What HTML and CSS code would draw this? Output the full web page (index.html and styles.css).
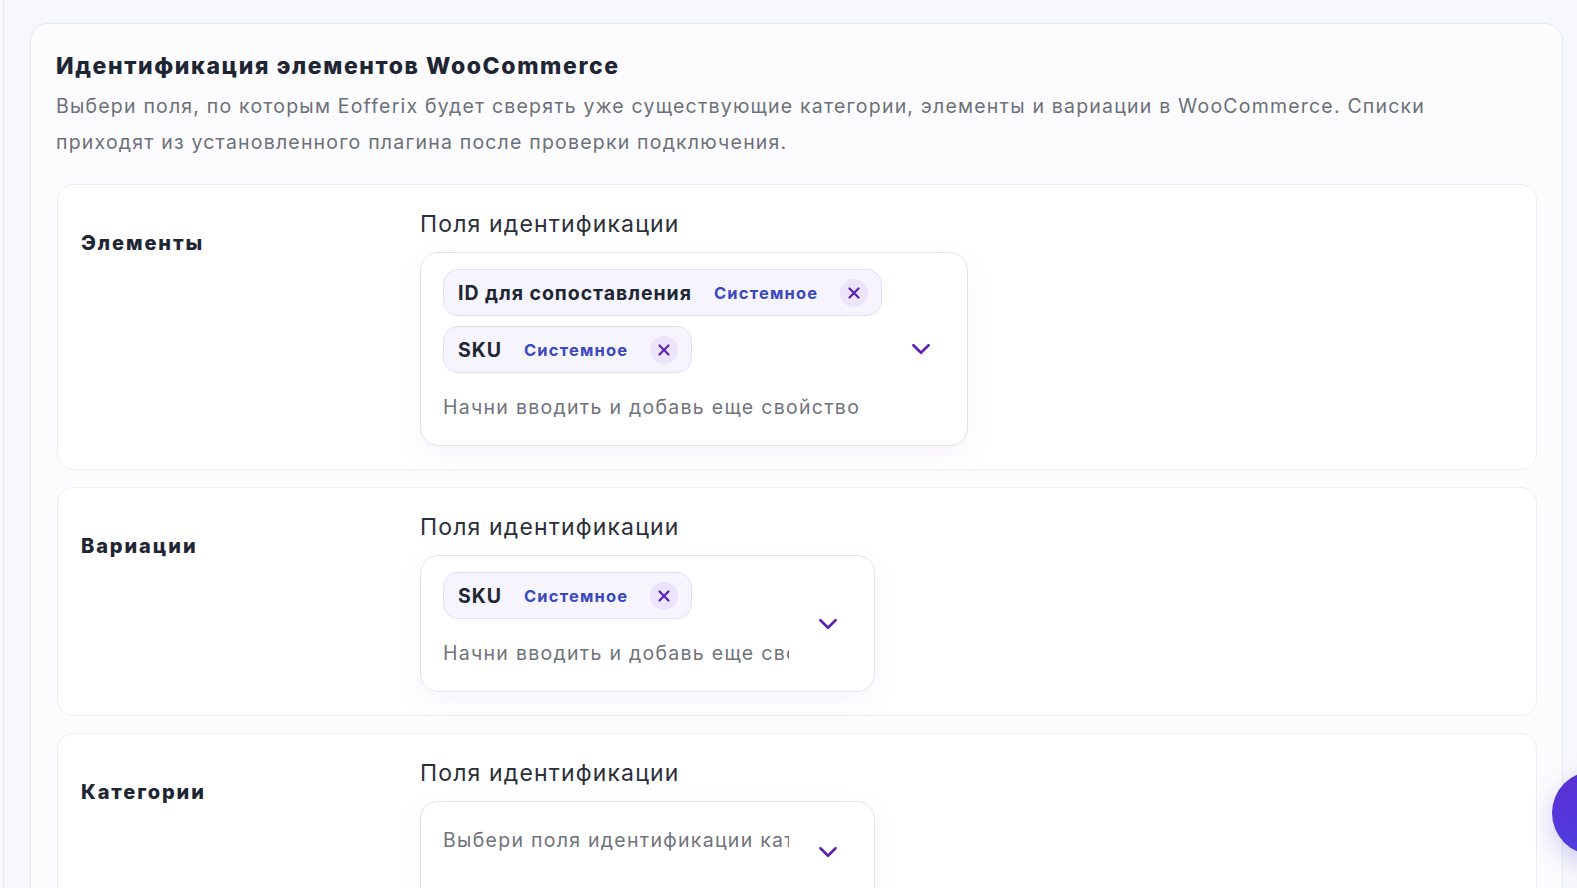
FILE: index.html
```html
<!DOCTYPE html>
<html lang="ru">

<head>
    <title>Идентификация элементов WooCommerce</title>
    <meta charset="UTF-8">
    <meta name="viewport" content="width=device-width, initial-scale=1">
    <link rel="stylesheet" href="styles.css">
</head>

<body>
    <div class="shell">
        <section class="panel">
            <h2 class="panel-title">Идентификация элементов WooCommerce</h2>
            <p class="panel-desc">Выбери поля, по которым Eofferix будет сверять уже существующие категории, элементы и вариации в WooCommerce. Списки приходят из установленного плагина после проверки подключения.</p>

            <!-- элементы -->
            <div class="entity">
                <div class="entity-name">Элементы</div>
                <div class="entity-field">
                    <div class="field-label">Поля идентификации</div>
                    <div class="select">
                        <div class="select-body">
                            <div class="chips">
                                <span class="chip">
                                    <span class="chip-text">ID для сопоставления</span>
                                    <span class="chip-badge">Системное</span>
                                    <span class="chip-remove"><svg width="14" height="14" viewBox="0 0 14 14"><path d="M2.5 2.5l9 9M11.5 2.5l-9 9" /></svg></span>
                                </span>
                                <span class="chip">
                                    <span class="chip-text">SKU</span>
                                    <span class="chip-badge">Системное</span>
                                    <span class="chip-remove"><svg width="14" height="14" viewBox="0 0 14 14"><path d="M2.5 2.5l9 9M11.5 2.5l-9 9" /></svg></span>
                                </span>
                            </div>
                            <input class="select-input" placeholder="Начни вводить и добавь еще свойство">
                        </div>
                        <svg class="chevron" width="26" height="26" viewBox="0 0 24 24"><path d="M5 8.5l7 7 7-7" /></svg>
                    </div>
                </div>
            </div>

            <!-- вариации -->
            <div class="entity">
                <div class="entity-name">Вариации</div>
                <div class="entity-field">
                    <div class="field-label">Поля идентификации</div>
                    <div class="select">
                        <div class="select-body">
                            <div class="chips">
                                <span class="chip">
                                    <span class="chip-text">SKU</span>
                                    <span class="chip-badge">Системное</span>
                                    <span class="chip-remove"><svg width="14" height="14" viewBox="0 0 14 14"><path d="M2.5 2.5l9 9M11.5 2.5l-9 9" /></svg></span>
                                </span>
                            </div>
                            <input class="select-input select-input-fixed" placeholder="Начни вводить и добавь еще свойство">
                        </div>
                        <svg class="chevron" width="26" height="26" viewBox="0 0 24 24"><path d="M5 8.5l7 7 7-7" /></svg>
                    </div>
                </div>
            </div>

            <!-- категории -->
            <div class="entity">
                <div class="entity-name">Категории</div>
                <div class="entity-field">
                    <div class="field-label">Поля идентификации</div>
                    <div class="select select-empty">
                        <div class="select-body">
                            <input class="select-input select-input-fixed" placeholder="Выбери поля идентификации категорий">
                        </div>
                        <svg class="chevron" width="26" height="26" viewBox="0 0 24 24"><path d="M5 8.5l7 7 7-7" /></svg>
                    </div>
                </div>
            </div>
        </section>
    </div>

    <button class="fab" aria-label="Помощь"></button>
</body>

</html>
```

FILE: styles.css
```css
* {
    margin: 0px;
    padding: 0px;
    box-sizing: border-box;
}

body {
    background: #f7f8fb;
    font-family: Inter, "Noto Sans", sans-serif;
    color: #1f2633;
    overflow: hidden;
}

.shell {
    margin-left: 3px;
    border-left: 1px solid #e9eaf0;
    padding: 23px 14px 0 26px;
    min-height: 888px;
}

.panel {
    background: #fcfcfe;
    border: 1px solid #e8e9f0;
    border-radius: 18px;
    padding: 27px 25px 0 25px;
}

.panel-title {
    font-size: 23px;
    line-height: 30px;
    font-weight: 800;
    color: #1e2533;
    letter-spacing: 1.6px;
}

.panel-desc {
    margin-top: 7px;
    font-size: 19.5px;
    line-height: 36px;
    color: #6b7079;
    letter-spacing: 1.2px;
    max-width: 1410px;
}

.entity {
    display: flex;
    background: #fff;
    border: 1px solid #eceef3;
    border-radius: 16px;
    padding: 25px 23px 23px;
    margin-top: 17px;
    margin-left: 1px;
}

.panel-desc + .entity {
    margin-top: 24px;
}

.entity-name {
    width: 339px;
    flex-shrink: 0;
    padding-top: 19px;
    font-size: 20px;
    line-height: 28px;
    font-weight: 800;
    letter-spacing: 1.9px;
    color: #1f2633;
}

.field-label {
    font-size: 23px;
    line-height: 28px;
    letter-spacing: 1.15px;
    color: #2b303b;
}

.select {
    display: inline-flex;
    align-items: center;
    gap: 26px;
    margin-top: 14px;
    background: #fff;
    border: 1px solid #e5e2ee;
    border-radius: 18px;
    padding: 16px 33px 16px 22px;
    box-shadow: 0 10px 26px rgba(150, 110, 200, 0.08);
}

.select-empty {
    align-items: flex-start;
    min-height: 104px;
    padding-top: 24px;
}

.select-empty .chevron {
    margin-top: 13px;
}

.select-body {
    display: flex;
    flex-direction: column;
    align-items: flex-start;
}

.chips {
    display: flex;
    flex-direction: column;
    align-items: flex-start;
    gap: 10px;
    margin-bottom: 20px;
}

.chip {
    display: inline-flex;
    align-items: center;
    height: 47px;
    padding: 0 13px 0 14px;
    background: #f6f4fd;
    border: 1px solid #e4def4;
    border-radius: 15px;
}

.chip-text {
    font-size: 19.5px;
    font-weight: 700;
    letter-spacing: 0.95px;
    color: #1f2633;
}

.chip-badge {
    margin-left: 22px;
    font-size: 16.5px;
    font-weight: 700;
    letter-spacing: 1.2px;
    color: #3a48c2;
}

.chip-remove {
    display: flex;
    align-items: center;
    justify-content: center;
    width: 28px;
    height: 28px;
    margin-left: 22px;
    border-radius: 50%;
    background: #ebe4fb;
}

.chip-remove path {
    stroke: #5b21b6;
    stroke-width: 2.2;
    stroke-linecap: round;
    fill: none;
}

.select-input {
    border: none;
    outline: none;
    background: transparent;
    font-family: Inter, "Noto Sans", sans-serif;
    font-size: 19.5px;
    letter-spacing: 1.28px;
    line-height: 28px;
    height: 28px;
    margin-bottom: 8px;
    width: 430px;
    color: #1f2633;
}

.select-empty .select-input {
    margin-bottom: 0;
}

.select-input-fixed {
    width: 346px;
}

.select-input::placeholder {
    color: #6f737c;
}

.chevron path {
    stroke: #5b21b6;
    stroke-width: 2.4;
    stroke-linecap: round;
    stroke-linejoin: round;
    fill: none;
}

.fab {
    position: fixed;
    left: 1552px;
    top: 771px;
    width: 84px;
    height: 84px;
    border: none;
    border-radius: 50%;
    background: linear-gradient(160deg, #5a2fd3, #4b3fe0);
    box-shadow: 0 8px 24px rgba(80, 60, 220, 0.25);
}
```
